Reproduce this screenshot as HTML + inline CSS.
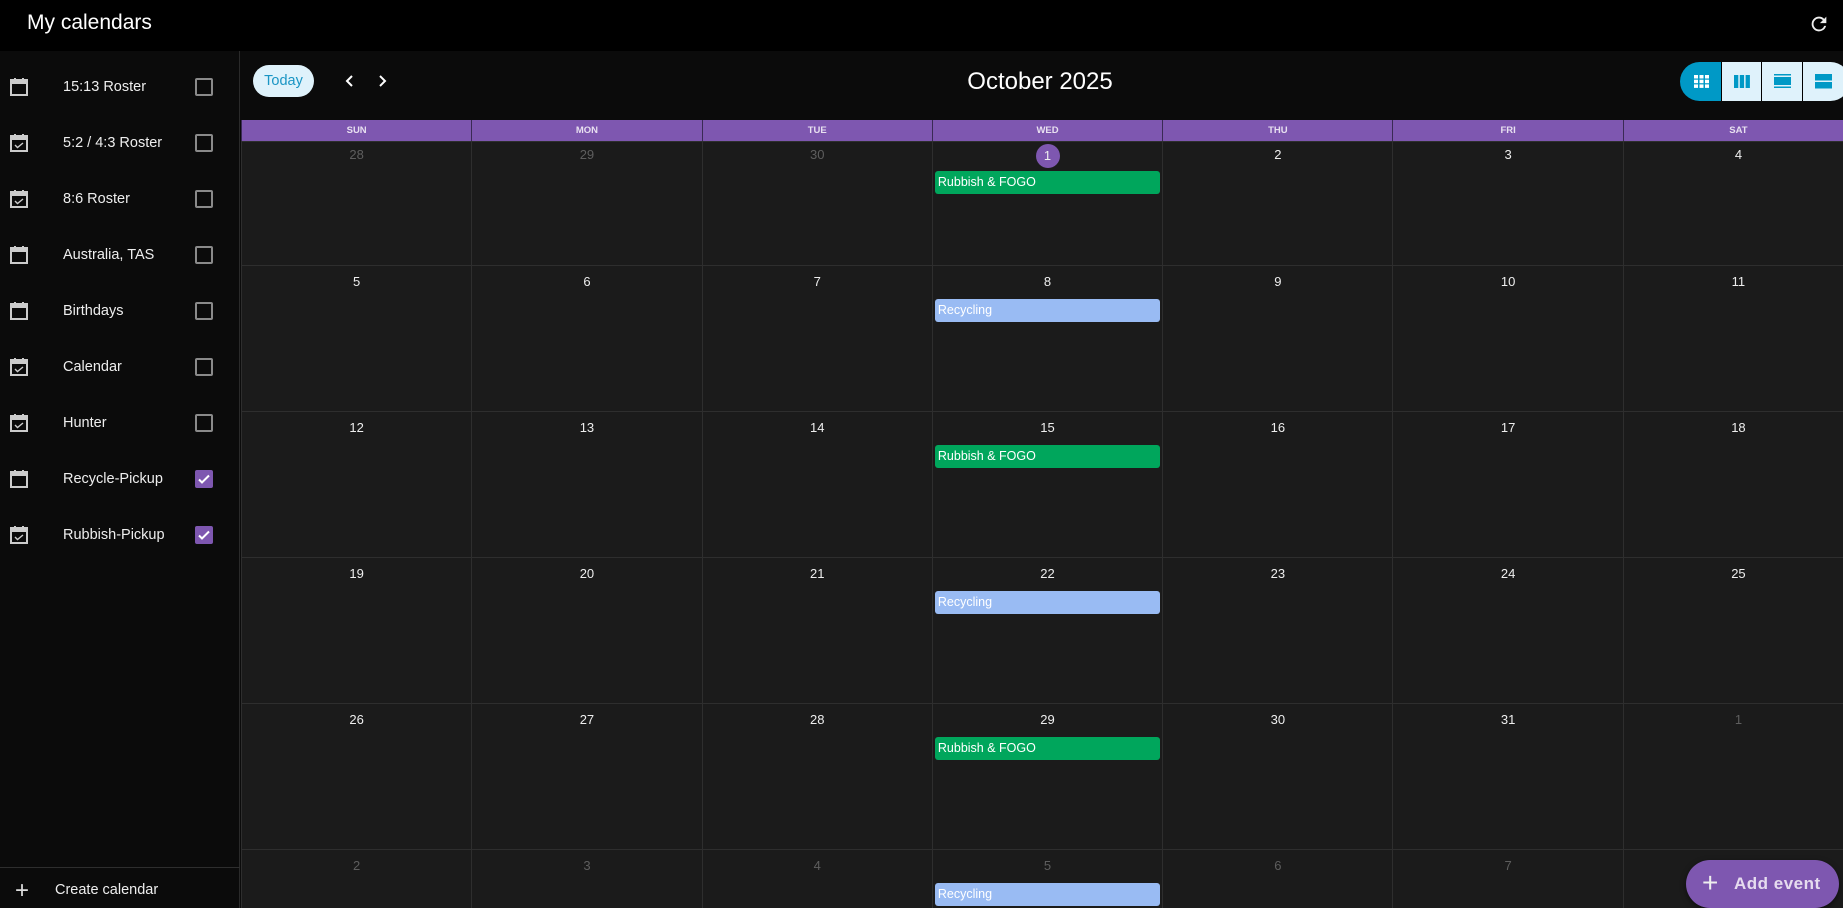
<!DOCTYPE html>
<html><head><meta charset="utf-8"><style>
*{box-sizing:border-box;margin:0;padding:0}
body{width:1843px;height:908px;overflow:hidden;background:#0b0b0b;font-family:"Liberation Sans",Roboto,sans-serif;color:#e6e6e6;position:relative}
.abs{position:absolute}
#top{left:0;top:0;width:1843px;height:51px;background:#000}
#side{left:0;top:51px;width:240px;height:857px;background:#0b0b0b;border-right:1px solid #2a2a2a}
.item{position:absolute;left:0;width:239px;height:56px}
.item svg{position:absolute;left:9px;top:18px}
.item .lbl{position:absolute;left:63px;top:0;line-height:56px;font-size:14.5px;color:#eee}
.cb{position:absolute;left:195px;top:19px;width:18px;height:18px;border:2px solid #8a8a8a;border-radius:2px}
.cb.on{background:#7e57b0;border-color:#7e57b0}
#grid{left:241px;top:141px;display:grid;grid-template-columns:repeat(7,230.3px);grid-template-rows:124px 146px 146px 146px 146px 59px;background:#1b1b1b}
.c{border-left:1px solid #2e2e2e;border-top:1px solid #2e2e2e;position:relative;text-align:center;font-size:13px;color:#eee;padding-top:8px}
.r0{padding-top:5px}
.c.g{color:#5e5e5e}
.ev{position:absolute;left:2px;right:2px;height:23px;border-radius:3px;text-align:left;font-size:12.5px;line-height:23px;padding-left:3px;color:#fff}
.gr{background:#00a65c}.bl{background:#99bbf3}
#hdr{left:241px;top:120px;height:21px;display:grid;grid-template-columns:repeat(7,230.3px);background:#7e57b0}
#hdr div{border-left:1px solid #3a2a55;text-align:center;font-size:9.5px;font-weight:bold;line-height:21px;color:#e8e0f0}
</style></head><body>
<div id="top" class="abs"></div>
<div class="abs" style="left:27px;top:11px;font-size:21px;color:#fff">My calendars</div>
<svg class="abs" style="left:1808px;top:13px" width="22" height="22" viewBox="0 0 24 24"><path fill="#eee" d="M17.65 6.35A7.958 7.958 0 0 0 12 4a8 8 0 1 0 7.730 10h-2.08A5.99 5.99 0 0 1 12 18a6 6 0 1 1 0-12c1.66 0 3.14.69 4.22 1.78L13 11h7V4l-2.350 2.350z"/></svg>
<div id="side" class="abs">
</div>
<div class="abs" style="left:0;top:51px;width:240px;height:857px">
<div class="item" style="top:8px"><svg width="20" height="20" viewBox="0 0 20 20"><rect x="2" y="3" width="16" height="15" fill="none" stroke="#ccc" stroke-width="2"/><rect x="2" y="3" width="16" height="4" fill="#ccc"/><rect x="5" y="1" width="2" height="3" fill="#ccc"/><rect x="13" y="1" width="2" height="3" fill="#ccc"/></svg><span class="lbl">15:13 Roster</span><span class="cb"></span></div>
<div class="item" style="top:64px"><svg width="20" height="20" viewBox="0 0 20 20"><rect x="2" y="3" width="16" height="15" fill="none" stroke="#ccc" stroke-width="2"/><rect x="2" y="3" width="16" height="4" fill="#ccc"/><rect x="5" y="1" width="2" height="3" fill="#ccc"/><rect x="13" y="1" width="2" height="3" fill="#ccc"/><path d="M6 12l2.5 2.5L14 10" fill="none" stroke="#ccc" stroke-width="1.4"/></svg><span class="lbl">5:2 / 4:3 Roster</span><span class="cb"></span></div>
<div class="item" style="top:120px"><svg width="20" height="20" viewBox="0 0 20 20"><rect x="2" y="3" width="16" height="15" fill="none" stroke="#ccc" stroke-width="2"/><rect x="2" y="3" width="16" height="4" fill="#ccc"/><rect x="5" y="1" width="2" height="3" fill="#ccc"/><rect x="13" y="1" width="2" height="3" fill="#ccc"/><path d="M6 12l2.5 2.5L14 10" fill="none" stroke="#ccc" stroke-width="1.4"/></svg><span class="lbl">8:6 Roster</span><span class="cb"></span></div>
<div class="item" style="top:176px"><svg width="20" height="20" viewBox="0 0 20 20"><rect x="2" y="3" width="16" height="15" fill="none" stroke="#ccc" stroke-width="2"/><rect x="2" y="3" width="16" height="4" fill="#ccc"/><rect x="5" y="1" width="2" height="3" fill="#ccc"/><rect x="13" y="1" width="2" height="3" fill="#ccc"/></svg><span class="lbl">Australia, TAS</span><span class="cb"></span></div>
<div class="item" style="top:232px"><svg width="20" height="20" viewBox="0 0 20 20"><rect x="2" y="3" width="16" height="15" fill="none" stroke="#ccc" stroke-width="2"/><rect x="2" y="3" width="16" height="4" fill="#ccc"/><rect x="5" y="1" width="2" height="3" fill="#ccc"/><rect x="13" y="1" width="2" height="3" fill="#ccc"/></svg><span class="lbl">Birthdays</span><span class="cb"></span></div>
<div class="item" style="top:288px"><svg width="20" height="20" viewBox="0 0 20 20"><rect x="2" y="3" width="16" height="15" fill="none" stroke="#ccc" stroke-width="2"/><rect x="2" y="3" width="16" height="4" fill="#ccc"/><rect x="5" y="1" width="2" height="3" fill="#ccc"/><rect x="13" y="1" width="2" height="3" fill="#ccc"/><path d="M6 12l2.5 2.5L14 10" fill="none" stroke="#ccc" stroke-width="1.4"/></svg><span class="lbl">Calendar</span><span class="cb"></span></div>
<div class="item" style="top:344px"><svg width="20" height="20" viewBox="0 0 20 20"><rect x="2" y="3" width="16" height="15" fill="none" stroke="#ccc" stroke-width="2"/><rect x="2" y="3" width="16" height="4" fill="#ccc"/><rect x="5" y="1" width="2" height="3" fill="#ccc"/><rect x="13" y="1" width="2" height="3" fill="#ccc"/><path d="M6 12l2.5 2.5L14 10" fill="none" stroke="#ccc" stroke-width="1.4"/></svg><span class="lbl">Hunter</span><span class="cb"></span></div>
<div class="item" style="top:400px"><svg width="20" height="20" viewBox="0 0 20 20"><rect x="2" y="3" width="16" height="15" fill="none" stroke="#ccc" stroke-width="2"/><rect x="2" y="3" width="16" height="4" fill="#ccc"/><rect x="5" y="1" width="2" height="3" fill="#ccc"/><rect x="13" y="1" width="2" height="3" fill="#ccc"/></svg><span class="lbl">Recycle-Pickup</span><span class="cb on"><svg style="position:absolute;left:0;top:0" width="14" height="14" viewBox="0 0 14 14"><path d="M2 7.5l3 3L12 3.5" fill="none" stroke="#fff" stroke-width="2"/></svg></span></div>
<div class="item" style="top:456px"><svg width="20" height="20" viewBox="0 0 20 20"><rect x="2" y="3" width="16" height="15" fill="none" stroke="#ccc" stroke-width="2"/><rect x="2" y="3" width="16" height="4" fill="#ccc"/><rect x="5" y="1" width="2" height="3" fill="#ccc"/><rect x="13" y="1" width="2" height="3" fill="#ccc"/><path d="M6 12l2.5 2.5L14 10" fill="none" stroke="#ccc" stroke-width="1.4"/></svg><span class="lbl">Rubbish-Pickup</span><span class="cb on"><svg style="position:absolute;left:0;top:0" width="14" height="14" viewBox="0 0 14 14"><path d="M2 7.5l3 3L12 3.5" fill="none" stroke="#fff" stroke-width="2"/></svg></span></div>
<div class="abs" style="left:0;top:816px;width:240px;height:1px;background:#2e2e2e"></div>
<div class="abs" style="left:15px;top:832px;font-size:24px;color:#ddd;line-height:16px;font-weight:300">+</div>
<div class="abs" style="left:55px;top:831px;font-size:14.5px;color:#eee">Create calendar</div>
</div>

<div class="abs" style="left:253px;top:65px;width:61px;height:32px;border-radius:16px;background:#dff2fb;color:#1a95c4;font-size:14.5px;text-align:center;line-height:32px">Today</div>
<svg class="abs" style="left:342px;top:73px" width="16" height="16" viewBox="0 0 16 16"><path d="M10 3L5 8l5 5" fill="none" stroke="#fff" stroke-width="2"/></svg>
<svg class="abs" style="left:374px;top:73px" width="16" height="16" viewBox="0 0 16 16"><path d="M6 3l5 5-5 5" fill="none" stroke="#fff" stroke-width="2"/></svg>
<div class="abs" style="left:940px;top:68px;width:200px;text-align:center;font-size:24px;color:#fff">October 2025</div>

<div class="abs" style="left:1680px;top:62px;width:170px;height:39px;border-radius:20px;overflow:hidden;background:#000;display:flex;gap:1px">
<div style="width:41px;background:#0099c6;position:relative"><svg style="position:absolute;left:14px;top:13px" width="15" height="13" viewBox="0 0 15 13"><g fill="#fff"><rect x="0" y="0" width="4" height="3.5"/><rect x="5.5" y="0" width="4" height="3.5"/><rect x="11" y="0" width="4" height="3.5"/><rect x="0" y="4.7" width="4" height="3.5"/><rect x="5.5" y="4.7" width="4" height="3.5"/><rect x="11" y="4.7" width="4" height="3.5"/><rect x="0" y="9.4" width="4" height="3.5"/><rect x="5.5" y="9.4" width="4" height="3.5"/><rect x="11" y="9.4" width="4" height="3.5"/></g></svg></div>
<div style="width:40px;background:#dff2fb;position:relative"><svg style="position:absolute;left:12px;top:13px" width="16" height="13" viewBox="0 0 16 13"><g fill="#0099c6"><rect x="0" width="4.3" height="13"/><rect x="5.8" width="4.3" height="13"/><rect x="11.6" width="4.3" height="13"/></g></svg></div>
<div style="width:40px;background:#dff2fb;position:relative"><svg style="position:absolute;left:12px;top:12px" width="17" height="15" viewBox="0 0 17 15"><g fill="#0099c6"><rect y="0" width="17" height="1.5"/><rect y="3" width="17" height="8"/><rect y="12.5" width="17" height="1.5"/></g></svg></div>
<div style="width:48px;background:#dff2fb;position:relative"><svg style="position:absolute;left:12px;top:12px" width="17" height="15" viewBox="0 0 17 15"><g fill="#0099c6"><rect y="0" width="17" height="6.5"/><rect y="8" width="17" height="6.5"/></g></svg></div>
</div>

<div id="hdr" class="abs"><div>SUN</div><div>MON</div><div>TUE</div><div>WED</div><div>THU</div><div>FRI</div><div>SAT</div></div>

<div id="grid" class="abs">
<div class="c g r0">28</div><div class="c g r0">29</div><div class="c g r0">30</div><div class="c" style="padding-top:2px"><span style="display:inline-block;width:24px;height:24px;border-radius:12px;background:#7e57b0;line-height:24px">1</span><div class="ev gr" style="top:29px">Rubbish &amp; FOGO</div></div><div class="c r0">2</div><div class="c r0">3</div><div class="c r0">4</div>
<div class="c">5</div><div class="c">6</div><div class="c">7</div><div class="c">8<div class="ev bl" style="top:33px">Recycling</div></div><div class="c">9</div><div class="c">10</div><div class="c">11</div>
<div class="c">12</div><div class="c">13</div><div class="c">14</div><div class="c">15<div class="ev gr" style="top:33px">Rubbish &amp; FOGO</div></div><div class="c">16</div><div class="c">17</div><div class="c">18</div>
<div class="c">19</div><div class="c">20</div><div class="c">21</div><div class="c">22<div class="ev bl" style="top:33px">Recycling</div></div><div class="c">23</div><div class="c">24</div><div class="c">25</div>
<div class="c">26</div><div class="c">27</div><div class="c">28</div><div class="c">29<div class="ev gr" style="top:33px">Rubbish &amp; FOGO</div></div><div class="c">30</div><div class="c">31</div><div class="c g">1</div>
<div class="c g">2</div><div class="c g">3</div><div class="c g">4</div><div class="c g">5<div class="ev bl" style="top:33px">Recycling</div></div><div class="c g">6</div><div class="c g">7</div><div class="c g">8</div>
</div>

<div class="abs" style="left:1686px;top:860px;width:153px;height:48px;border-radius:24px;background:#7e57b0;box-shadow:0 2px 6px rgba(0,0,0,.5)">
<div class="abs" style="left:16px;top:9px;font-size:28px;color:#eee;line-height:28px;font-weight:300">+</div>
<div class="abs" style="left:48px;top:14px;font-size:17px;font-weight:bold;color:#e6dcef;letter-spacing:.5px">Add event</div>
</div>
</body></html>
